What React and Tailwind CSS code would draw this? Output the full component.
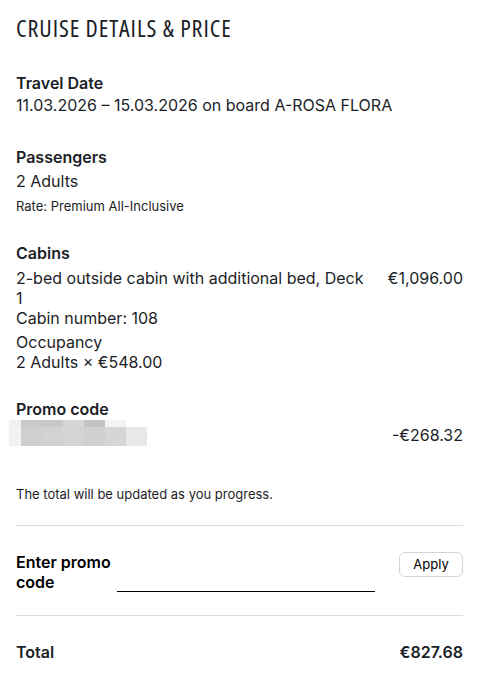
import React from 'react';

const Section = ({ title, children, className = '' }) => (
  <div className={className}>
    <h3 className="text-base font-semibold leading-[22px]">{title}</h3>
    {children}
  </div>
);

// redacted promo code, drawn as the pixelated blur in the screenshot
const BlurredCode = () => (
  <div className="flex flex-col">
    <div className="flex h-[7px]">
      <div className="w-[12px] bg-[#f1f1f2]" />
      <div className="w-[42px] bg-[#c9c9cb]" />
      <div className="w-[21px] bg-[#d6d6d8]" />
      <div className="w-[21px] bg-[#c3c3c5]" />
      <div className="w-[21px] bg-[#f4f4f6]" />
    </div>
    <div className="flex h-[19px]">
      <div className="w-[12px] bg-[#f2f2f3]" />
      <div className="w-[21px] bg-[#cfcfd1]" />
      <div className="w-[21px] bg-[#d2d2d4]" />
      <div className="w-[21px] bg-[#d4d4d6]" />
      <div className="w-[21px] bg-[#d1d1d3]" />
      <div className="w-[21px] bg-[#d6d6d8]" />
      <div className="w-[21px] bg-[#e8e8ea]" />
    </div>
  </div>
);

export default function App() {
  return (
    <div className="min-h-screen bg-white px-4 text-[#1c1e26] font-['Inter','Noto_Sans',sans-serif]">
      <h1 className="pt-[14px] text-[24px] leading-[28px] tracking-[0.9px] font-['Open_Sans',sans-serif] font-stretch-condensed">
        CRUISE DETAILS &amp; PRICE
      </h1>

      <Section title="Travel Date" className="mt-[30px]">
        <p className="text-base leading-[22px]">11.03.2026 – 15.03.2026 on board A-ROSA FLORA</p>
      </Section>

      <Section title="Passengers" className="mt-[30px]">
        <p className="text-base leading-[26px]">2 Adults</p>
        <p className="text-[13px] leading-[24px]">Rate: Premium All-Inclusive</p>
      </Section>

      <Section title="Cabins" className="mt-[24px]">
        <div className="mt-1 flex justify-between gap-6">
          <div className="flex-1 text-base leading-[20px]">
            <p>2-bed outside cabin with additional bed, Deck 1</p>
            <p>Cabin number: 108</p>
            <p className="mt-1">Occupancy</p>
            <p>2 Adults × €548.00</p>
          </div>
          <div className="text-base leading-[20px]">€1,096.00</div>
        </div>
      </Section>

      <Section title="Promo code" className="mt-[26px]">
        <div className="-ml-[7px] flex items-center justify-between">
          <BlurredCode />
          <span className="pt-[4px] text-base leading-[22px]">-€268.32</span>
        </div>
      </Section>

      <p className="mt-[38px] text-[13px] leading-[20px]">The total will be updated as you progress.</p>

      <div className="mt-[21px] border-t border-[#dcdcdc]" />

      <div className="flex items-start justify-between pt-[26px] pb-[23px]">
        <label className="w-[100px] text-base font-semibold leading-[20px] text-black">Enter promo code</label>
        <input
          type="text"
          className="mt-[15px] w-[258px] border-b border-black bg-transparent outline-none"
        />
        <button className="ml-6 h-[25px] w-[64px] rounded-md border border-[#d4d4d8] text-[13px] text-black">
          Apply
        </button>
      </div>

      <div className="border-t border-[#dcdcdc]" />

      <div className="flex justify-between pt-[25px] text-base font-semibold leading-[22px]">
        <span>Total</span>
        <span>€827.68</span>
      </div>
    </div>
  );
}
